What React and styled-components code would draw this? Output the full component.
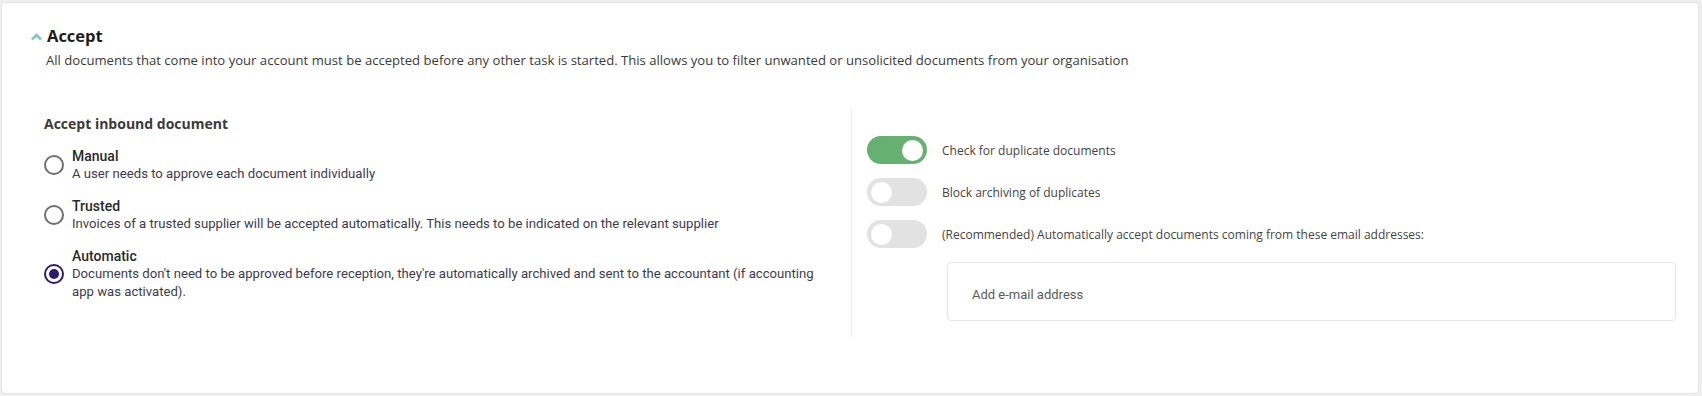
import React, { useState } from 'react'
import styled, { createGlobalStyle } from 'styled-components'

const GlobalStyle = createGlobalStyle`
  html, body {
    margin: 0;
    background: #efefef;
  }
  body {
    padding: 2px 3px 2px 1px;
    font-family: "Open Sans", "Liberation Sans", sans-serif;
  }
`

const options = [
  {
    id: 'manual',
    label: 'Manual',
    text: 'A user needs to approve each document individually',
  },
  {
    id: 'trusted',
    label: 'Trusted',
    text: 'Invoices of a trusted supplier will be accepted automatically. This needs to be indicated on the relevant supplier',
  },
  {
    id: 'automatic',
    label: 'Automatic',
    text: "Documents don't need to be approved before reception, they're automatically archived and sent to the accountant (if accounting app was activated).",
  },
]

const switches = [
  { id: 'dup', label: 'Check for duplicate documents' },
  { id: 'block', label: 'Block archiving of duplicates' },
  { id: 'mail', label: '(Recommended) Automatically accept documents coming from these email addresses:' },
]

function App() {
  const [mode, setMode] = useState('automatic')
  const [toggles, setToggles] = useState({ dup: true, block: false, mail: false })

  function flip(id) {
    setToggles((prev) => ({ ...prev, [id]: !prev[id] }))
  }

  return (
    <>
      <GlobalStyle />
      <Card>
        <Header>
          <svg width="13" height="9" viewBox="0 0 13 9">
            <polyline points="2,7.5 6.5,3 11,7.5" fill="none" stroke="#8dc8c0" strokeWidth="3" />
          </svg>
          <Title>Accept</Title>
        </Header>
        <Intro>
          All documents that come into your account must be accepted before any other task is started. This allows you to filter unwanted or unsolicited documents from your organisation
        </Intro>

        <Body>
          <Left>
            <Heading>Accept inbound document</Heading>
            <OptionList>
              {options.map((o) => (
                <Option key={o.id} onClick={() => setMode(o.id)}>
                  <Radio checked={mode === o.id} />
                  <div>
                    <OptionLabel>{o.label}</OptionLabel>
                    <OptionText>{o.text}</OptionText>
                  </div>
                </Option>
              ))}
            </OptionList>
          </Left>

          <Right>
            {switches.map((s) => (
              <SwitchRow key={s.id}>
                <Switch on={toggles[s.id] ? 1 : 0} onClick={() => flip(s.id)}>
                  <span />
                </Switch>
                <SwitchLabel>{s.label}</SwitchLabel>
              </SwitchRow>
            ))}
            <EmailBox placeholder="Add e-mail address" />
          </Right>
        </Body>
      </Card>
    </>
  )
}

export default App

const Card = styled.div`
  box-sizing: border-box;
  height: 392px;
  background: #fff;
  border: 1px solid #e4e4e4;
  border-radius: 4px;
  padding: 21px 0 0 28px;
`

const Header = styled.div`
  display: flex;
  align-items: center;
  gap: 4px;
  height: 24px;
`

const Title = styled.h2`
  margin: 0;
  font-size: 16.5px;
  font-weight: 700;
  line-height: 24px;
  color: #1c1c1c;
`

const Intro = styled.p`
  margin: 3px 0 0 16px;
  font-size: 13.1px;
  line-height: 18px;
  color: #3a3a3a;
`

const Body = styled.div`
  display: grid;
  grid-template-columns: 808px 1fr;
  margin: 40px 0 0 14px;
`

const Left = styled.div`
  border-right: 1px solid #ececec;
  padding: 5px 22px 0 0;
`

const Heading = styled.h3`
  margin: 0;
  font-size: 14px;
  font-weight: 700;
  line-height: 20px;
  color: #3a3a3a;
`

const OptionList = styled.div`
  display: flex;
  flex-direction: column;
  gap: 14px;
  margin-top: 13px;
`

const Option = styled.div`
  display: flex;
  align-items: center;
  gap: 8px;
  cursor: pointer;
`

const Radio = styled.span`
  flex: none;
  box-sizing: border-box;
  width: 20px;
  height: 20px;
  border-radius: 50%;
  border: 2px solid ${(p) => (p.checked ? '#2d1c6b' : '#6e6e6e')};
  display: flex;
  align-items: center;
  justify-content: center;

  &::after {
    content: '';
    width: 10px;
    height: 10px;
    border-radius: 50%;
    background: ${(p) => (p.checked ? '#2d1c6b' : 'transparent')};
  }
`

const OptionLabel = styled.div`
  font-family: Roboto, "Liberation Sans", sans-serif;
  font-size: 14px;
  font-weight: 500;
  line-height: 18px;
  color: #2a2a2a;
`

const OptionText = styled.div`
  font-family: Roboto, "Liberation Sans", sans-serif;
  font-size: 13.15px;
  line-height: 18px;
  color: #3d3b4d;
`

const Right = styled.div`
  display: flex;
  flex-direction: column;
  gap: 14px;
  padding: 27px 22px 16px 15px;
`

const SwitchRow = styled.div`
  display: flex;
  align-items: center;
  gap: 15px;
`

const Switch = styled.button`
  flex: none;
  box-sizing: border-box;
  width: 60px;
  height: 28px;
  border: none;
  border-radius: 14px;
  padding: 0 4px;
  background: ${(p) => (p.on ? '#66b172' : '#e2e2e2')};
  display: flex;
  align-items: center;
  justify-content: ${(p) => (p.on ? 'flex-end' : 'flex-start')};
  cursor: pointer;

  span {
    width: 21px;
    height: 21px;
    border-radius: 50%;
    background: #fff;
  }
`

const SwitchLabel = styled.span`
  font-size: 12px;
  color: #444;
`

const EmailBox = styled.input`
  box-sizing: border-box;
  margin-left: 80px;
  height: 59px;
  border: 1px solid #e6e6e6;
  border-radius: 4px;
  padding: 6px 24px 0;
  font-family: Roboto, "Liberation Sans", sans-serif;
  font-size: 13px;
  outline: none;

  &::placeholder {
    color: #5a5a5a;
  }
`
